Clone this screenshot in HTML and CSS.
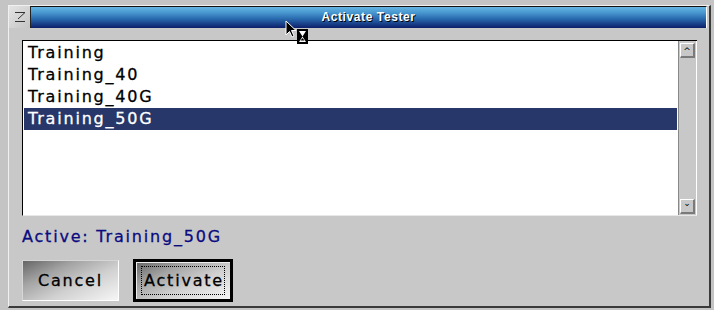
FILE: index.html
```html
<!DOCTYPE html>
<html lang="en">
<head>
  <meta charset="UTF-8" />
  <title>Activate Tester</title>
  <link rel="stylesheet" href="styles.css">
</head>
<body>
  <div class="window">
    <div class="titlebar">
      <div class="menu-box">
        <svg width="12" height="12" viewBox="0 0 12 12">
          <path d="M1 1.5H11L4 8" fill="none" stroke="#333" stroke-width="1"/>
          <path d="M1 10.5H11" stroke="#333" stroke-width="1"/>
        </svg>
      </div>
      <div class="title">Activate Tester</div>
    </div>

    <div class="content">
      <div class="listbox">
        <ul class="items">
          <li>Training</li>
          <li>Training_40</li>
          <li>Training_40G</li>
          <li class="selected">Training_50G</li>
        </ul>
        <div class="scrollbar">
          <div class="arrow">&#94;</div>
          <div class="track"></div>
          <div class="arrow down">&#8964;</div>
        </div>
      </div>

      <div class="active-label">Active: Training_50G</div>

      <div class="buttons">
        <button class="btn">Cancel</button>
        <button class="btn default"><span class="focus">Activate</span></button>
      </div>
    </div>
  </div>

  <!-- pointer with busy hourglass -->
  <svg class="cursor" width="26" height="26" viewBox="0 0 26 26">
    <path d="M1 1V15L4.5 11.5L7 17L9 16L6.5 10.5H11Z" fill="#000" stroke="#fff" stroke-width="1"/>
    <rect x="12" y="9" width="11" height="15" fill="#000"/>
    <path d="M14 11H21L17.5 16.5L21 22H14L17.5 16.5Z" fill="#fff"/>
    <path d="M15.5 20.5H19.5L17.5 18Z" fill="#000"/>
  </svg>
</body>
</html>
```

FILE: styles.css
```css
body {
  margin: 0;
  width: 714px;
  height: 310px;
  overflow: hidden;
  background: #c4c4c4;
  font-family: "DejaVu Sans", sans-serif;
  position: relative;
}
.window {
  margin: 5px 0 0 8px;
  width: 700px;
  height: 300px;
  background: #c8c8c8;
  border-top: 1px solid #f0f0f0;
  border-left: 1px solid #f0f0f0;
  border-right: 2px solid #3a3a3a;
  border-bottom: 2px solid #3a3a3a;
  display: flex;
  flex-direction: column;
}
.titlebar {
  display: flex;
  height: 22px;
  margin-right: 2px;
}
.menu-box {
  width: 21px;
  background: linear-gradient(135deg, #e4e4e4, #c4c4c4);
  border-right: 1px solid #222;
  display: flex;
  align-items: center;
  justify-content: center;
}
.title {
  flex: 1;
  background: linear-gradient(to bottom, #64b4e2 0%, #4a9ad2 25%, #2a6cb0 55%, #0c1e6a 100%);
  border-top: 1px solid #111;
  border-right: 1px solid #fff;
  color: #fff;
  font-family: "Liberation Sans", sans-serif;
  font-weight: bold;
  font-size: 12px;
  letter-spacing: 0.6px;
  text-align: center;
  line-height: 21px;
  text-shadow: 1px 1px 0 #000;
}
.content {
  padding: 12px 12px 0 13px;
}
.listbox {
  display: flex;
  height: 174px;
  border-top: 1px solid #000;
  border-left: 1px solid #000;
  border-bottom: 1px solid #e8e8e8;
}
.items {
  flex: 1;
  list-style: none;
  margin: 0;
  padding: 1px;
  background: #fff;
}
.items li {
  height: 22px;
  line-height: 22px;
  padding-left: 4px;
  font-size: 16px;
  letter-spacing: 1.8px;
  -webkit-text-stroke: 0.3px;
  color: #000;
}
.items li.selected {
  background: #27376a;
  color: #fff;
}
.scrollbar {
  width: 15px;
  display: flex;
  flex-direction: column;
  background: #c8c8c8;
  border-left: 1px solid #888;
  border-right: 1px solid #fff;
  padding: 2px 1px 1px 1px;
}
.arrow {
  height: 15px;
  box-sizing: border-box;
  border-top: 1px solid #fff;
  border-left: 1px solid #fff;
  border-right: 2px solid #7a7a7a;
  border-bottom: 2px solid #7a7a7a;
  font-size: 9px;
  line-height: 15px;
  text-align: center;
  color: #000;
}
.arrow.down {
  line-height: 6px;
}
.track {
  flex: 1;
}
.active-label {
  margin-top: 10px;
  line-height: 22px;
  font-size: 16px;
  letter-spacing: 1.8px;
  -webkit-text-stroke: 0.3px;
  color: #0b0b80;
}
.buttons {
  display: flex;
  align-items: center;
  gap: 14px;
  margin-top: 11px;
}
.btn {
  font-family: "DejaVu Sans", sans-serif;
  font-size: 16px;
  letter-spacing: 1.8px;
  -webkit-text-stroke: 0.3px;
  color: #000;
  width: 97px;
  height: 41px;
  padding: 0;
  border: 1px solid;
  border-color: #d6d6d6 #fff #fff #d6d6d6;
  background: linear-gradient(155deg, #666 0%, #a4a4a4 30%, #d0d0d0 60%, #f6f6f6 100%);
}
.btn.default {
  width: 100px;
  height: 43px;
  border: 3px solid #000;
  box-shadow: inset 1px 1px 0 #eee;
  display: flex;
  align-items: center;
  justify-content: center;
}
.focus {
  border: 1px dotted #000;
  padding: 4px 0 4px 2px;
}
.cursor {
  position: absolute;
  left: 285px;
  top: 20px;
}
```
